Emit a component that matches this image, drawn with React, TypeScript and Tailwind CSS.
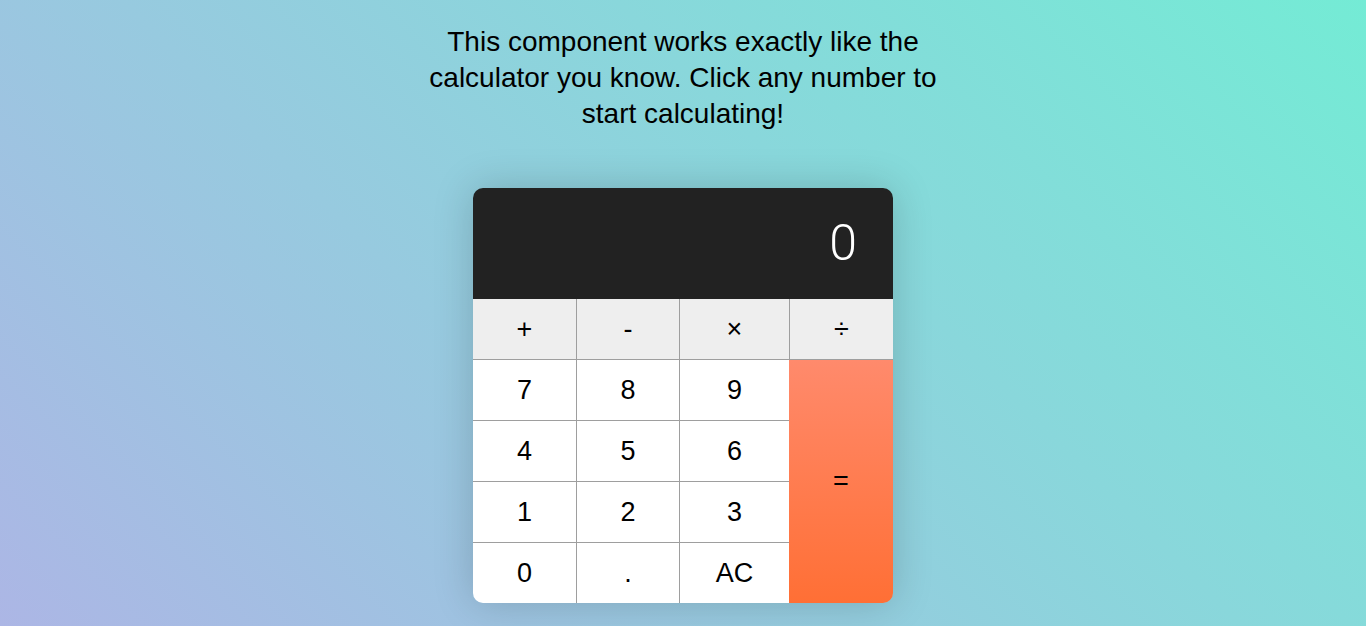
import React from "react";

const numRows = [
  ["7", "8", "9"],
  ["4", "5", "6"],
  ["1", "2", "3"],
  ["0", ".", "AC"],
];

export default function App() {
  return (
    <div
      className="min-h-[626px] w-full bg-[linear-gradient(45deg,#acb6e5,#74ebd5)] flex flex-col items-center text-black"
      style={{ fontFamily: '"Liberation Sans", Arial, sans-serif' }}
    >
      <p className="mt-[24px] w-[530px] text-center text-[28px] leading-[36px]">
        This component works exactly like the calculator you know. Click any number to start calculating!
      </p>
      <div className="mt-[56px] w-[420px] rounded-[10px] overflow-hidden shadow-[0_0_40px_rgba(0,0,0,0.18)]">
        <div className="h-[111px] bg-[#222222] flex items-center justify-end pr-[36px] text-white text-[50px] font-light" style={{ fontFamily: 'Roboto, "Open Sans", sans-serif' }}>
          0
        </div>
        <div className="flex h-[61px] bg-[#eeeeee] border-b border-[#9e9e9e] text-[27px]">
          <div className="w-[104px] border-r border-[#9e9e9e] flex items-center justify-center">+</div>
          <div className="w-[103px] border-r border-[#9e9e9e] flex items-center justify-center">-</div>
          <div className="w-[110px] border-r border-[#9e9e9e] flex items-center justify-center">×</div>
          <div className="w-[103px] flex items-center justify-center">÷</div>
        </div>
        <div className="flex text-[27px]">
          <div className="flex flex-col bg-white">
            {numRows.map((row, ri) => (
              <div key={ri} className={ri < 3 ? "flex h-[61px] border-b border-[#9e9e9e]" : "flex h-[60px]"}>
                <div className="w-[104px] border-r border-[#9e9e9e] flex items-center justify-center">{row[0]}</div>
                <div className="w-[103px] border-r border-[#9e9e9e] flex items-center justify-center">{row[1]}</div>
                <div className="w-[109px] flex items-center justify-center">{row[2]}</div>
              </div>
            ))}
          </div>
          <div className="w-[104px] bg-[linear-gradient(to_bottom,#ff8a6c,#ff6f35)] flex items-center justify-center">=</div>
        </div>
      </div>
    </div>
  );
}
